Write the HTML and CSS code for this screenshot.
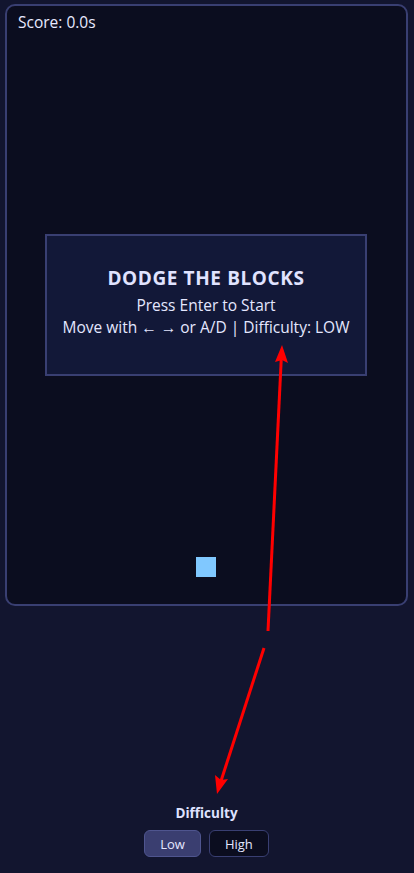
FILE: index.html
```html
<!DOCTYPE html>
<html>
<head>
<meta charset="utf-8">
<link rel="stylesheet" href="styles.css">
</head>
<body>
<div class="page">
  <div class="frame">
    <div class="score">Score: 0.0s</div>
    <div class="overlay">
      <div class="title">DODGE THE BLOCKS</div>
      <div class="line">Press Enter to Start</div>
      <div class="line">Move with ← → or A/D | Difficulty: LOW</div>
    </div>
    <div class="player"></div>
  </div>
  <div class="controls">
    <div class="label">Difficulty</div>
    <div class="buttons">
      <button class="btn active">Low</button>
      <button class="btn">High</button>
    </div>
  </div>
</div>
<svg class="annot" width="414" height="873" viewBox="0 0 414 873">
  <line x1="268" y1="631" x2="281.3" y2="358" stroke="#ff0000" stroke-width="3"/>
  <polygon points="282,345 288,363 282,360 275,362" fill="#ff0000"/>
  <line x1="264" y1="648" x2="221" y2="781" stroke="#ff0000" stroke-width="3"/>
  <polygon points="217,794 215,775 221,780 228,779" fill="#ff0000"/>
</svg>
</body>
</html>
```
FILE: styles.css
```css
html, body {
  margin: 0;
  padding: 0;
}
body {
  background: #12152f;
  font-family: "Open Sans", "Noto Sans", sans-serif;
  color: #e4e7ff;
  width: 414px;
  height: 873px;
  overflow: hidden;
  position: relative;
}
.page {
  display: flex;
  flex-direction: column;
  padding: 4px 0 0 5px;
}
.frame {
  position: relative;
  width: 399px;
  height: 598px;
  border: 2px solid #393f72;
  border-radius: 10px;
  background: #0b0d1f;
}
.score {
  position: absolute;
  left: 11px;
  top: 5px;
  font-size: 15.5px;
  color: #e8eaff;
}
.overlay {
  position: absolute;
  left: 38px;
  top: 228px;
  width: 322px;
  height: 142px;
  padding-bottom: 6px;
  box-sizing: border-box;
  border: 2px solid #393f72;
  background: #121838;
  display: flex;
  flex-direction: column;
  align-items: center;
  justify-content: center;
  text-align: center;
}
.title {
  font-weight: 700;
  font-size: 19px;
  line-height: 24px;
  color: #e0e3ff;
  margin-bottom: 4px;
  letter-spacing: 0.6px;
}
.line {
  font-size: 15.5px;
  line-height: 22px;
  color: #e4e7ff;
}
.player {
  position: absolute;
  left: 189px;
  top: 551px;
  width: 20px;
  height: 20px;
  background: #80c8ff;
}
.controls {
  margin-top: 199px;
  display: flex;
  flex-direction: column;
  align-items: center;
  gap: 8px;
  width: 403px;
}
.label {
  font-size: 13.5px;
  font-weight: 700;
  color: #dfe2ff;
  line-height: 17px;
}
.buttons {
  display: flex;
  gap: 8px;
}
.btn {
  font-family: "Open Sans", "Noto Sans", sans-serif;
  font-size: 13px;
  color: #e4e7ff;
  background: #0b0d1f;
  border: 1px solid #393f72;
  border-radius: 6px;
  height: 27px;
  padding: 0 15px;
  cursor: pointer;
}
.btn.active {
  background: #3a3e70;
  border-color: #4f558f;
}
.annot {
  position: absolute;
  left: 0;
  top: 0;
  pointer-events: none;
}
```
